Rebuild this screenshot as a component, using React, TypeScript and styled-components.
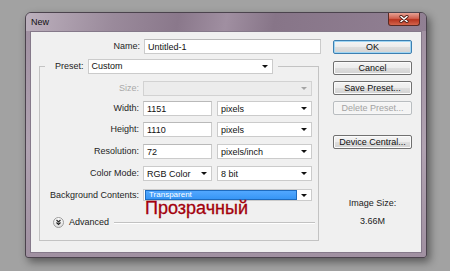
import styled, { createGlobalStyle } from 'styled-components'

const GlobalStyle = createGlobalStyle`
  html, body {
    margin: 0;
    padding: 0;
  }
  body {
    background: #a2a2a2;
    font-family: 'Liberation Sans', Arial, sans-serif;
    font-size: 9px;
    color: #222;
  }
`

const Screen = styled.div`
  width: 450px;
  height: 271px;
  box-sizing: border-box;
  padding: 12px 0 0 25px;
  overflow: hidden;
`

const Dialog = styled.div`
  width: 402px;
  height: 246px;
  box-sizing: border-box;
  border: 1px solid #4b434d;
  border-radius: 6px 6px 3px 3px;
  background: linear-gradient(180deg, #9f8fa0 0%, #b0a2b1 55%, #a090a1 100%);
  box-shadow: 3px 4px 9px rgba(0, 0, 0, 0.45);
  display: flex;
  flex-direction: column;
  overflow: hidden;
`

const TitleBar = styled.div`
  height: 18px;
  flex: none;
  display: flex;
  align-items: flex-start;
  padding: 0 6px 0 5px;
  background: linear-gradient(
    100deg,
    #bcb0bd 0%,
    #9a8a9b 22%,
    #8a788b 38%,
    #a08fa1 50%,
    #877588 62%,
    #918093 100%
  );
`

const Title = styled.span`
  line-height: 18px;
  font-size: 9px;
  color: #111;
`

const CloseButton = styled.div`
  margin-left: auto;
  width: 32px;
  height: 13px;
  border: 1px solid #5a2a24;
  border-top: none;
  border-radius: 0 0 3px 3px;
  box-sizing: border-box;
  background: linear-gradient(180deg, #e6a294 0%, #d0604f 45%, #b8341f 55%, #d4644c 100%);
  display: flex;
  align-items: center;
  justify-content: center;
`

const Body = styled.div`
  flex: 1;
  display: flex;
  padding: 0 4px 4px;
`

const Client = styled.div`
  flex: 1;
  display: flex;
  border: 1px solid #85798a;
  background: #f0f0f0;
  padding: 7px 9px 0 0;
`

const FormColumn = styled.div`
  width: 290px;
  display: flex;
  flex-direction: column;
`

const NameRow = styled.div`
  display: flex;
  align-items: center;
  gap: 4px;
  height: 15px;
`

const Label = styled.span<{ $width: number; $height?: number; $muted?: boolean }>`
  width: ${(p) => p.$width}px;
  flex: none;
  text-align: right;
  line-height: ${(p) => p.$height ?? 15}px;
  white-space: nowrap;
  color: ${(p) => (p.$muted ? '#a9a9a9' : '#1e1e1e')};
`

const TextField = styled.div<{ $width: number }>`
  width: ${(p) => p.$width}px;
  height: 15px;
  box-sizing: border-box;
  border: 1px solid #cbcbcb;
  border-top-color: #b9b9b9;
  background: #fff;
  padding-left: 3px;
  display: flex;
  align-items: center;
  color: #111;
  white-space: nowrap;
`

const Dropdown = styled(TextField)<{ $disabled?: boolean; $height?: number }>`
  height: ${(p) => p.$height ?? 15}px;
  justify-content: space-between;
  padding-right: 4px;
  background: ${(p) => (p.$disabled ? '#ececec' : '#fff')};
  border-color: ${(p) => (p.$disabled ? '#d2d2d2' : '#cbcbcb')};
`

const Arrow = styled.span<{ $muted?: boolean }>`
  width: 0;
  height: 0;
  flex: none;
  border-left: 3px solid transparent;
  border-right: 3px solid transparent;
  border-top: 3px solid ${(p) => (p.$muted ? '#a5a5a5' : '#111')};
`

const Highlight = styled.span`
  flex: 1;
  align-self: stretch;
  margin: 0 4px 0 -2px;
  border: 1px solid #1e6cc0;
  background: linear-gradient(180deg, #52a8ff, #3796f5);
  color: #fff;
  font-size: 8px;
  line-height: 8px;
  padding-left: 3px;
  display: flex;
  align-items: center;
`

const Group = styled.fieldset`
  margin: 4px 0 0 8px;
  width: 280px;
  box-sizing: border-box;
  min-width: 0;
  padding: 7px 0 12px 0;
  border: 1px solid #c3c3c3;
`

const Legend = styled.legend`
  margin-left: 5px;
  padding: 0 5px 0 10px;
  height: 16px;
  display: flex;
  align-items: center;
  gap: 4px;
`

const Row = styled.div<{ $space?: number }>`
  display: flex;
  align-items: flex-start;
  gap: 4px;
  margin-top: ${(p) => p.$space ?? 0}px;
`

const Pair = styled.div`
  display: flex;
  gap: 5px;
`

const ValueStack = styled.div`
  display: flex;
  flex-direction: column;
`

const Annotation = styled.span`
  padding-left: 2px;
  font-family: 'Liberation Sans', Arial, sans-serif;
  font-size: 18px;
  line-height: 14px;
  color: #a3000c;
  -webkit-text-stroke: 0.3px #a3000c;
`

const AdvancedRow = styled.div`
  margin-top: 1px;
  height: 12px;
  display: flex;
  align-items: center;
  padding: 0 3px 0 13px;
  gap: 5px;
`

const Rule = styled.span`
  flex: 1;
  height: 1px;
  background: #c2c2c2;
  box-shadow: 0 1px 0 #fff;
`

const ButtonColumn = styled.div`
  width: 79px;
  margin-left: auto;
  display: flex;
  flex-direction: column;
`

const Button = styled.div<{ $space: number; $primary?: boolean; $disabled?: boolean }>`
  margin-top: ${(p) => p.$space}px;
  height: 14px;
  box-sizing: border-box;
  border: 1px solid ${(p) => (p.$primary ? '#3c7fb1' : p.$disabled ? '#b9bdc0' : '#707070')};
  border-radius: 2px;
  background: ${(p) =>
    p.$disabled
      ? '#f4f4f4'
      : 'linear-gradient(180deg, #f4f4f4 0%, #ececec 50%, #dedede 51%, #d2d2d2 100%)'};
  box-shadow: inset 0 0 0 1px ${(p) => (p.$primary ? '#9fd5f3' : p.$disabled ? '#f7f7f7' : '#fbfbfb')};
  color: ${(p) => (p.$disabled ? '#a3a3a3' : '#111')};
  display: flex;
  align-items: center;
  justify-content: center;
  white-space: nowrap;
`

const ImageSize = styled.div`
  margin-top: 45px;
  text-align: center;
  line-height: 18px;
  color: #222;
`

const CloseIcon = () => (
  <svg width="10" height="8" viewBox="0 0 10 8">
    <path d="M2 1.5 L8 6.5 M8 1.5 L2 6.5" stroke="#4a1b14" strokeWidth="3.2" strokeLinecap="round" />
    <path d="M2 1.5 L8 6.5 M8 1.5 L2 6.5" stroke="#fff" strokeWidth="1.6" strokeLinecap="round" />
  </svg>
)

const AdvancedIcon = () => (
  <svg width="11" height="11" viewBox="0 0 11 11">
    <defs>
      <linearGradient id="adv" x1="0" y1="0" x2="0" y2="1">
        <stop offset="0" stopColor="#ffffff" />
        <stop offset="1" stopColor="#dcdcdc" />
      </linearGradient>
    </defs>
    <circle cx="5.5" cy="5.5" r="5" fill="url(#adv)" stroke="#9b9b9b" />
    <path d="M3.5 3 L5.5 5 L7.5 3 M3.5 5.5 L5.5 7.5 L7.5 5.5" fill="none" stroke="#222" strokeWidth="1.1" />
  </svg>
)

export default function App() {
  return (
    <Screen>
      <GlobalStyle />
      <Dialog>
        <TitleBar>
          <Title>New</Title>
          <CloseButton>
            <CloseIcon />
          </CloseButton>
        </TitleBar>
        <Body>
          <Client>
            <FormColumn>
              <NameRow>
                <Label $width={109}>Name:</Label>
                <TextField $width={177}>Untitled-1</TextField>
              </NameRow>
              <Group>
                <Legend>
                  <span>Preset:</span>
                  <Dropdown $width={185}>
                    Custom
                    <Arrow />
                  </Dropdown>
                </Legend>
                <Row>
                  <Label $width={99} $muted>
                    Size:
                  </Label>
                  <Dropdown $width={169} $disabled>
                    <span />
                    <Arrow $muted />
                  </Dropdown>
                </Row>
                <Row $space={5}>
                  <Label $width={99}>Width:</Label>
                  <Pair>
                    <TextField $width={69}>1151</TextField>
                    <Dropdown $width={95}>
                      pixels
                      <Arrow />
                    </Dropdown>
                  </Pair>
                </Row>
                <Row $space={6}>
                  <Label $width={99}>Height:</Label>
                  <Pair>
                    <TextField $width={69}>1110</TextField>
                    <Dropdown $width={95}>
                      pixels
                      <Arrow />
                    </Dropdown>
                  </Pair>
                </Row>
                <Row $space={7}>
                  <Label $width={99}>Resolution:</Label>
                  <Pair>
                    <TextField $width={69}>72</TextField>
                    <Dropdown $width={95}>
                      pixels/inch
                      <Arrow />
                    </Dropdown>
                  </Pair>
                </Row>
                <Row $space={7}>
                  <Label $width={99}>Color Mode:</Label>
                  <Pair>
                    <Dropdown $width={69}>
                      RGB Color
                      <Arrow />
                    </Dropdown>
                    <Dropdown $width={95}>
                      8 bit
                      <Arrow />
                    </Dropdown>
                  </Pair>
                </Row>
                <Row $space={8}>
                  <Label $width={99} $height={12}>
                    Background Contents:
                  </Label>
                  <ValueStack>
                    <Dropdown $width={169} $height={12}>
                      <Highlight>Transparent</Highlight>
                      <Arrow />
                    </Dropdown>
                    <Annotation>Прозрачный</Annotation>
                  </ValueStack>
                </Row>
                <AdvancedRow>
                  <AdvancedIcon />
                  <span>Advanced</span>
                  <Rule />
                </AdvancedRow>
              </Group>
            </FormColumn>
            <ButtonColumn>
              <Button $space={1} $primary>
                OK
              </Button>
              <Button $space={7}>Cancel</Button>
              <Button $space={6}>Save Preset...</Button>
              <Button $space={6} $disabled>
                Delete Preset...
              </Button>
              <Button $space={20}>Device Central...</Button>
              <ImageSize>
                Image Size:
                <br />
                3.66M
              </ImageSize>
            </ButtonColumn>
          </Client>
        </Body>
      </Dialog>
    </Screen>
  )
}
